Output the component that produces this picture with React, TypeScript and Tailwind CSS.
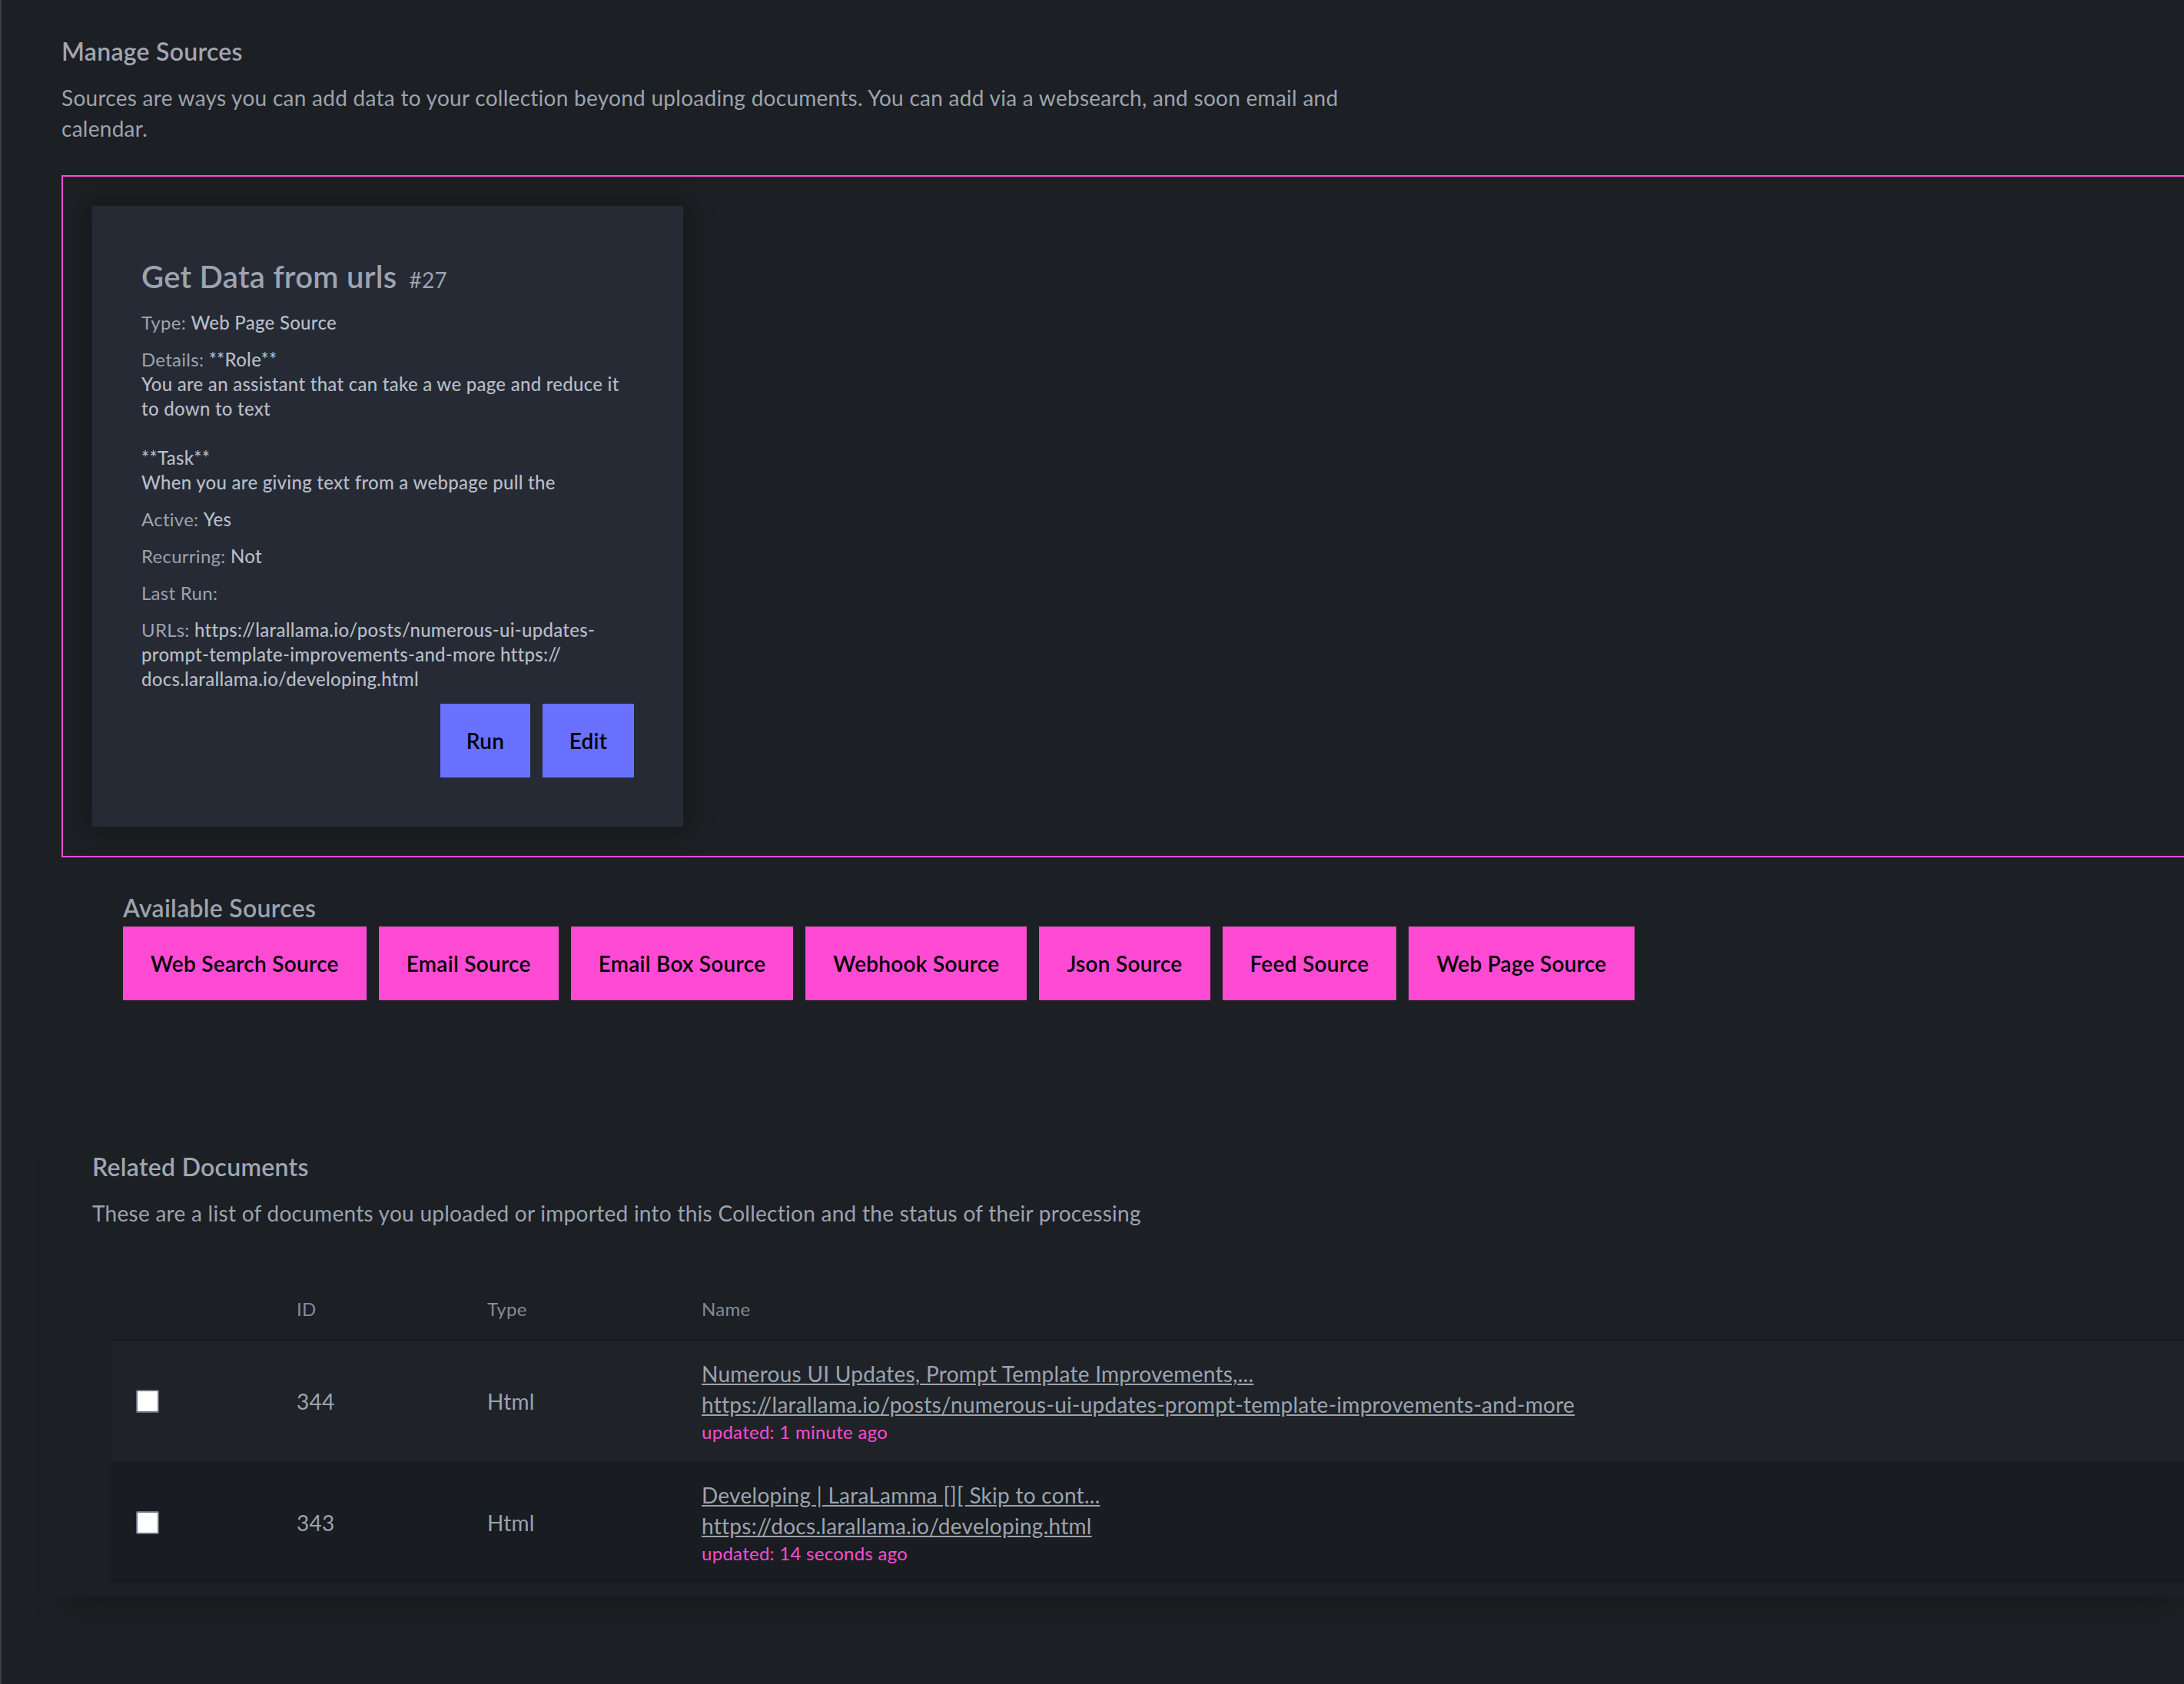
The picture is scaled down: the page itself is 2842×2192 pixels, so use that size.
import React from "react";

const sourceTypes = [
  "Web Search Source",
  "Email Source",
  "Email Box Source",
  "Webhook Source",
  "Json Source",
  "Feed Source",
  "Web Page Source",
];

const documents = [
  {
    id: 344,
    type: "Html",
    name: "Numerous UI Updates, Prompt Template Improvements,...",
    url: "https://larallama.io/posts/numerous-ui-updates-prompt-template-improvements-and-more",
    updated: "1 minute ago",
  },
  {
    id: 343,
    type: "Html",
    name: "Developing | LaraLamma [][ Skip to cont...",
    url: "https://docs.larallama.io/developing.html",
    updated: "14 seconds ago",
  },
];

const Field: React.FC<{ label: string; children?: React.ReactNode }> = ({ label, children }) => (
  <div className="whitespace-pre-line">
    <span className="text-[#9ca3af]">{label}: </span>
    <span className="font-medium text-[#b8bdc7]">{children}</span>
  </div>
);

const SourceCard: React.FC = () => (
  <div className="w-[769px] bg-[#252a34] p-[64px] shadow-[0_0_30px_10px_rgba(0,0,0,0.18)]">
    <div className="flex items-baseline gap-[16px]">
      <h3 className="text-[40px] leading-[56px] font-semibold text-[#9ca3af]">Get Data from urls</h3>
      <span className="text-[28px] leading-[40px] text-[#9ca3af]">#27</span>
    </div>
    <div className="mt-[16px] flex flex-col gap-[16px] text-[24px] leading-[32px]">
      <Field label="Type">Web Page Source</Field>
      <Field label="Details">
        {"**Role**\nYou are an assistant that can take a we page and reduce it\nto down to text\n\n**Task**\nWhen you are giving text from a webpage pull the"}
      </Field>
      <Field label="Active">Yes</Field>
      <Field label="Recurring">Not</Field>
      <Field label="Last Run" />
      <Field label="URLs">
        https://larallama.io/posts/numerous-ui-updates-prompt-template-improvements-and-more https://<wbr />docs.larallama.io/developing.html
      </Field>
    </div>
    <div className="mt-[16px] flex justify-end gap-[16px]">
      <button className="h-[96px] w-[117px] bg-[#6a70ff] text-[28px] font-semibold text-black">Run</button>
      <button className="h-[96px] w-[119px] bg-[#6a70ff] text-[28px] font-semibold text-black">Edit</button>
    </div>
  </div>
);

export default function App() {
  return (
    <div className="min-h-[2192px] w-full overflow-hidden border-l-2 border-[#3b3e44] bg-[#1c1f23] font-[Lato,sans-serif] tracking-[0.017em]">
      <section className="pl-[78px] pt-[43px]">
        <h2 className="text-[32px] leading-[48px] font-semibold text-[#a0a6b2]">Manage Sources</h2>
        <p className="mt-[16px] max-w-[1720px] text-[28px] leading-[40px] text-[#9ca3af]">
          Sources are ways you can add data to your collection beyond uploading documents. You can add via a websearch, and soon email and calendar.
        </p>

        <div className="mt-[41px] w-[2840px] border-2 border-[#ff4bd4] p-[38px]">
          <SourceCard />
        </div>

        <div className="mt-[42px] pl-[80px]">
          <h3 className="text-[32px] leading-[48px] font-semibold text-[#9ca3af]">Available Sources</h3>
          <div className="flex gap-[16px]">
            {sourceTypes.map((s) => (
              <button key={s} className="h-[96px] bg-[#ff4bd4] px-[36px] text-[28px] font-semibold text-black">
                {s}
              </button>
            ))}
          </div>
        </div>
      </section>

      <section className="ml-[70px] mt-[137px] pb-[16px] pl-[48px] pt-[56px] shadow-[0_30px_40px_-10px_rgba(0,0,0,0.12)]">
        <h2 className="text-[32px] leading-[48px] font-semibold text-[#a0a6b2]">Related Documents</h2>
        <p className="mt-[16px] text-[28px] leading-[40px] text-[#9ca3af]">
          These are a list of documents you uploaded or imported into this Collection and the status of their processing
        </p>

        <table className="ml-[25px] mt-[66px] w-[2800px] table-fixed border-collapse text-left">
          <colgroup>
            <col className="w-[209px]" />
            <col className="w-[248px]" />
            <col className="w-[279px]" />
            <col />
          </colgroup>
          <thead>
            <tr className="border-b-2 border-[#181b1f]">
              <th className="px-[32px] py-[23px]" />
              <th className="px-[32px] py-[23px] text-[24px] leading-[32px] font-normal text-[#858b96]">ID</th>
              <th className="px-[32px] py-[23px] text-[24px] leading-[32px] font-normal text-[#858b96]">Type</th>
              <th className="px-[32px] py-[23px] text-[24px] leading-[32px] font-normal text-[#858b96]">Name</th>
            </tr>
          </thead>
          <tbody>
            {documents.map((d, i) => (
              <tr key={d.id} className={i % 2 === 0 ? "bg-[#1f2328]" : "bg-[#191c20]"}>
                <td className="px-[32px] py-[23px] align-middle">
                  <input
                    type="checkbox"
                    className="block h-[30px] w-[30px] appearance-none rounded-[2px] border-2 border-[#6b7280] bg-white"
                  />
                </td>
                <td className="px-[32px] py-[23px] text-[28px] leading-[40px] text-[#9ca3af]">{d.id}</td>
                <td className="px-[32px] py-[23px] text-[28px] leading-[40px] text-[#9ca3af]">{d.type}</td>
                <td className="px-[32px] py-[23px]">
                  <div className="flex flex-col items-start">
                    <a className="text-[28px] leading-[40px] text-[#9ca3af] underline">{d.name}</a>
                    <a className="text-[28px] leading-[40px] text-[#9ca3af] underline">{d.url}</a>
                    <span className="text-[24px] leading-[32px] text-[#ff4bd4]">updated: {d.updated}</span>
                  </div>
                </td>
              </tr>
            ))}
          </tbody>
        </table>
      </section>
    </div>
  );
}
